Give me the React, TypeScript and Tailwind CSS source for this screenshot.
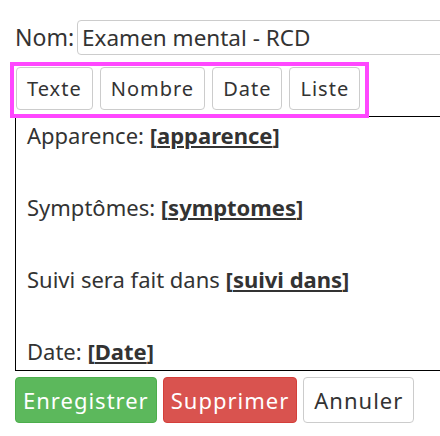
const font = { fontFamily: '"Noto Sans", "Open Sans", sans-serif' }

function Field({ label, name }: { label: string; name: string }) {
  return (
    <div className="h-[36px] leading-[36px] whitespace-nowrap">
      {label}{' '}
      <b className="font-bold">
        [<span className="underline">{name}</span>]
      </b>
    </div>
  )
}

const blank = <div className="h-[36px]" />

export default function App() {
  return (
    <div className="w-[440px] h-[436px] overflow-hidden bg-white text-[#333]" style={font}>
      <div className="pt-[20px] pl-[15px] w-[600px]">
        <div className="flex items-center h-[35px] text-[23px]">
          <span className="mr-[3px]">Nom:</span>
          <div className="h-[35px] w-[420px] border border-[#ccc] rounded-[4px] pl-[4px] flex items-center text-[22.5px]">
            Examen mental - RCD
          </div>
        </div>

        <div className="mt-[7px] -ml-[5px] relative z-10 inline-flex gap-[7px] border-4 border-[#ff47ff] pl-[2px] pr-[5px] pt-[1px] pb-[4px] bg-white -mb-[2px]">
          {['Texte', 'Nombre', 'Date', 'Liste'].map((t) => (
            <button
              key={t}
              className="h-[43px] px-[10px] border border-[#ccc] rounded-[4px] bg-white text-[20px] tracking-[1px] text-[#333]"
            >
              {t}
            </button>
          ))}
        </div>

        <div className="border border-black pl-[11px] pb-[1px] text-[22px]">
          <Field label="Apparence:" name="apparence" />
          {blank}
          <Field label="Symptômes:" name="symptomes" />
          {blank}
          <Field label="Suivi sera fait dans" name="suivi dans" />
          {blank}
          <Field label="Date:" name="Date" />
        </div>

        <div className="mt-[6px] flex gap-[6px]">
          <button className="h-[46px] px-[7px] rounded-[4px] bg-[#5cb85c] border border-[#4cae4c] text-white text-[22px] tracking-[1px]">
            Enregistrer
          </button>
          <button className="h-[46px] px-[7px] rounded-[4px] bg-[#d9534f] border border-[#d43f3a] text-white text-[22px] tracking-[1px]">
            Supprimer
          </button>
          <button className="h-[46px] px-[10px] rounded-[4px] bg-white border border-[#ccc] text-[#333] text-[22px] tracking-[1px]">
            Annuler
          </button>
        </div>
      </div>
    </div>
  )
}
